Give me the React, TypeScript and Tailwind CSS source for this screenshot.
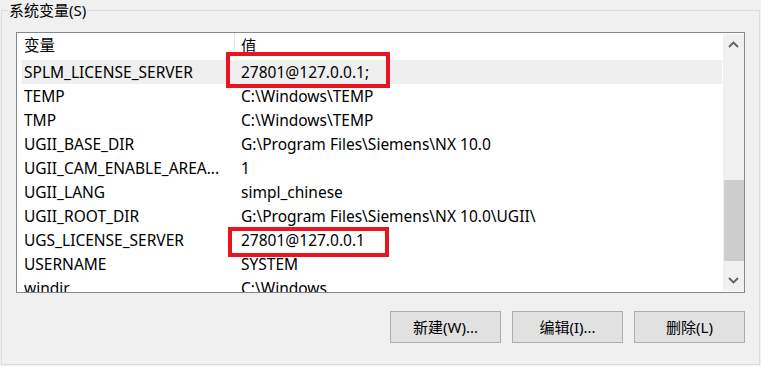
import React from "react";

const rows: [string, string][] = [
  ["SPLM_LICENSE_SERVER", "27801@127.0.0.1;"],
  ["TEMP", "C:\\Windows\\TEMP"],
  ["TMP", "C:\\Windows\\TEMP"],
  ["UGII_BASE_DIR", "G:\\Program Files\\Siemens\\NX 10.0"],
  ["UGII_CAM_ENABLE_AREA...", "1"],
  ["UGII_LANG", "simpl_chinese"],
  ["UGII_ROOT_DIR", "G:\\Program Files\\Siemens\\NX 10.0\\UGII\\"],
  ["UGS_LICENSE_SERVER", "27801@127.0.0.1"],
  ["USERNAME", "SYSTEM"],
  ["windir", "C:\\Windows"],
];

function Btn({ label }: { label: string }) {
  return (
    <div className="w-[111px] h-[32px] border border-[#adadad] bg-[#e1e1e1] flex items-center justify-center text-[15px] leading-[20px] text-black">
      {label}
    </div>
  );
}

export default function App() {
  return (
    <div className="relative w-[761px] h-[366px] overflow-hidden bg-[#f0f0f0] text-black font-['Segoe_UI','Noto_Sans','Noto_Sans_CJK_SC',sans-serif]">
      <fieldset className="ml-[1px] w-[759px] h-[365px] border border-[#dcdcdc] min-w-0">
        <legend className="ml-[6px] px-[1px] text-[15px] leading-[20px]">系统变量(S)</legend>
        <div className="mt-[12px] pl-[14px] pr-[14px]">
          <div className="w-[729px] h-[261px] border border-[#828790] bg-white flex">
            <div className="flex-1 overflow-hidden pl-[5px] pr-[1px]">
              <div className="h-[27px] flex text-[15.5px] leading-[27px]">
                <div className="w-[213px] pl-[2px] border-r border-[#e5e5e5] mb-[2px] leading-[25px]">变量</div>
                <div className="pl-[6px]">值</div>
              </div>
              {rows.map(([k, v], i) => (
                <div
                  key={k}
                  className={
                    "h-[24px] flex text-[15.5px] leading-[24px] whitespace-nowrap " +
                    (i === 0 ? "bg-[#efefef]" : "")
                  }
                >
                  <div className="w-[213px] pl-[2px]">{k}</div>
                  <div className="pl-[6px]">{v}</div>
                </div>
              ))}
            </div>
            <div className="w-[21px] my-[1px] bg-[#f0f0f0] flex flex-col">
              <div className="h-[21px] flex items-center justify-center">
                <svg width="11" height="7" viewBox="0 0 11 7">
                  <polyline points="1,6 5.5,1.5 10,6" fill="none" stroke="#606060" strokeWidth="1.8" />
                </svg>
              </div>
              <div className="flex-1 flex flex-col items-center">
                <div className="h-[125px]" />
                <div className="w-[20px] h-[81px] bg-[#cdcdcd]" />
              </div>
              <div className="h-[21px] flex items-center justify-center">
                <svg width="11" height="7" viewBox="0 0 11 7">
                  <polyline points="1,1 5.5,5.5 10,1" fill="none" stroke="#606060" strokeWidth="1.8" />
                </svg>
              </div>
            </div>
          </div>
          <div className="mt-[18px] flex justify-end gap-[11px]">
            <Btn label="新建(W)..." />
            <Btn label="编辑(I)..." />
            <Btn label="删除(L)" />
          </div>
        </div>
      </fieldset>
      <div className="absolute left-[226px] top-[52px] w-[164px] h-[36px] border-4 border-[#e8141f]" />
      <div className="absolute left-[228px] top-[227px] w-[161px] h-[30px] border-4 border-[#e8141f]" />
    </div>
  );
}
